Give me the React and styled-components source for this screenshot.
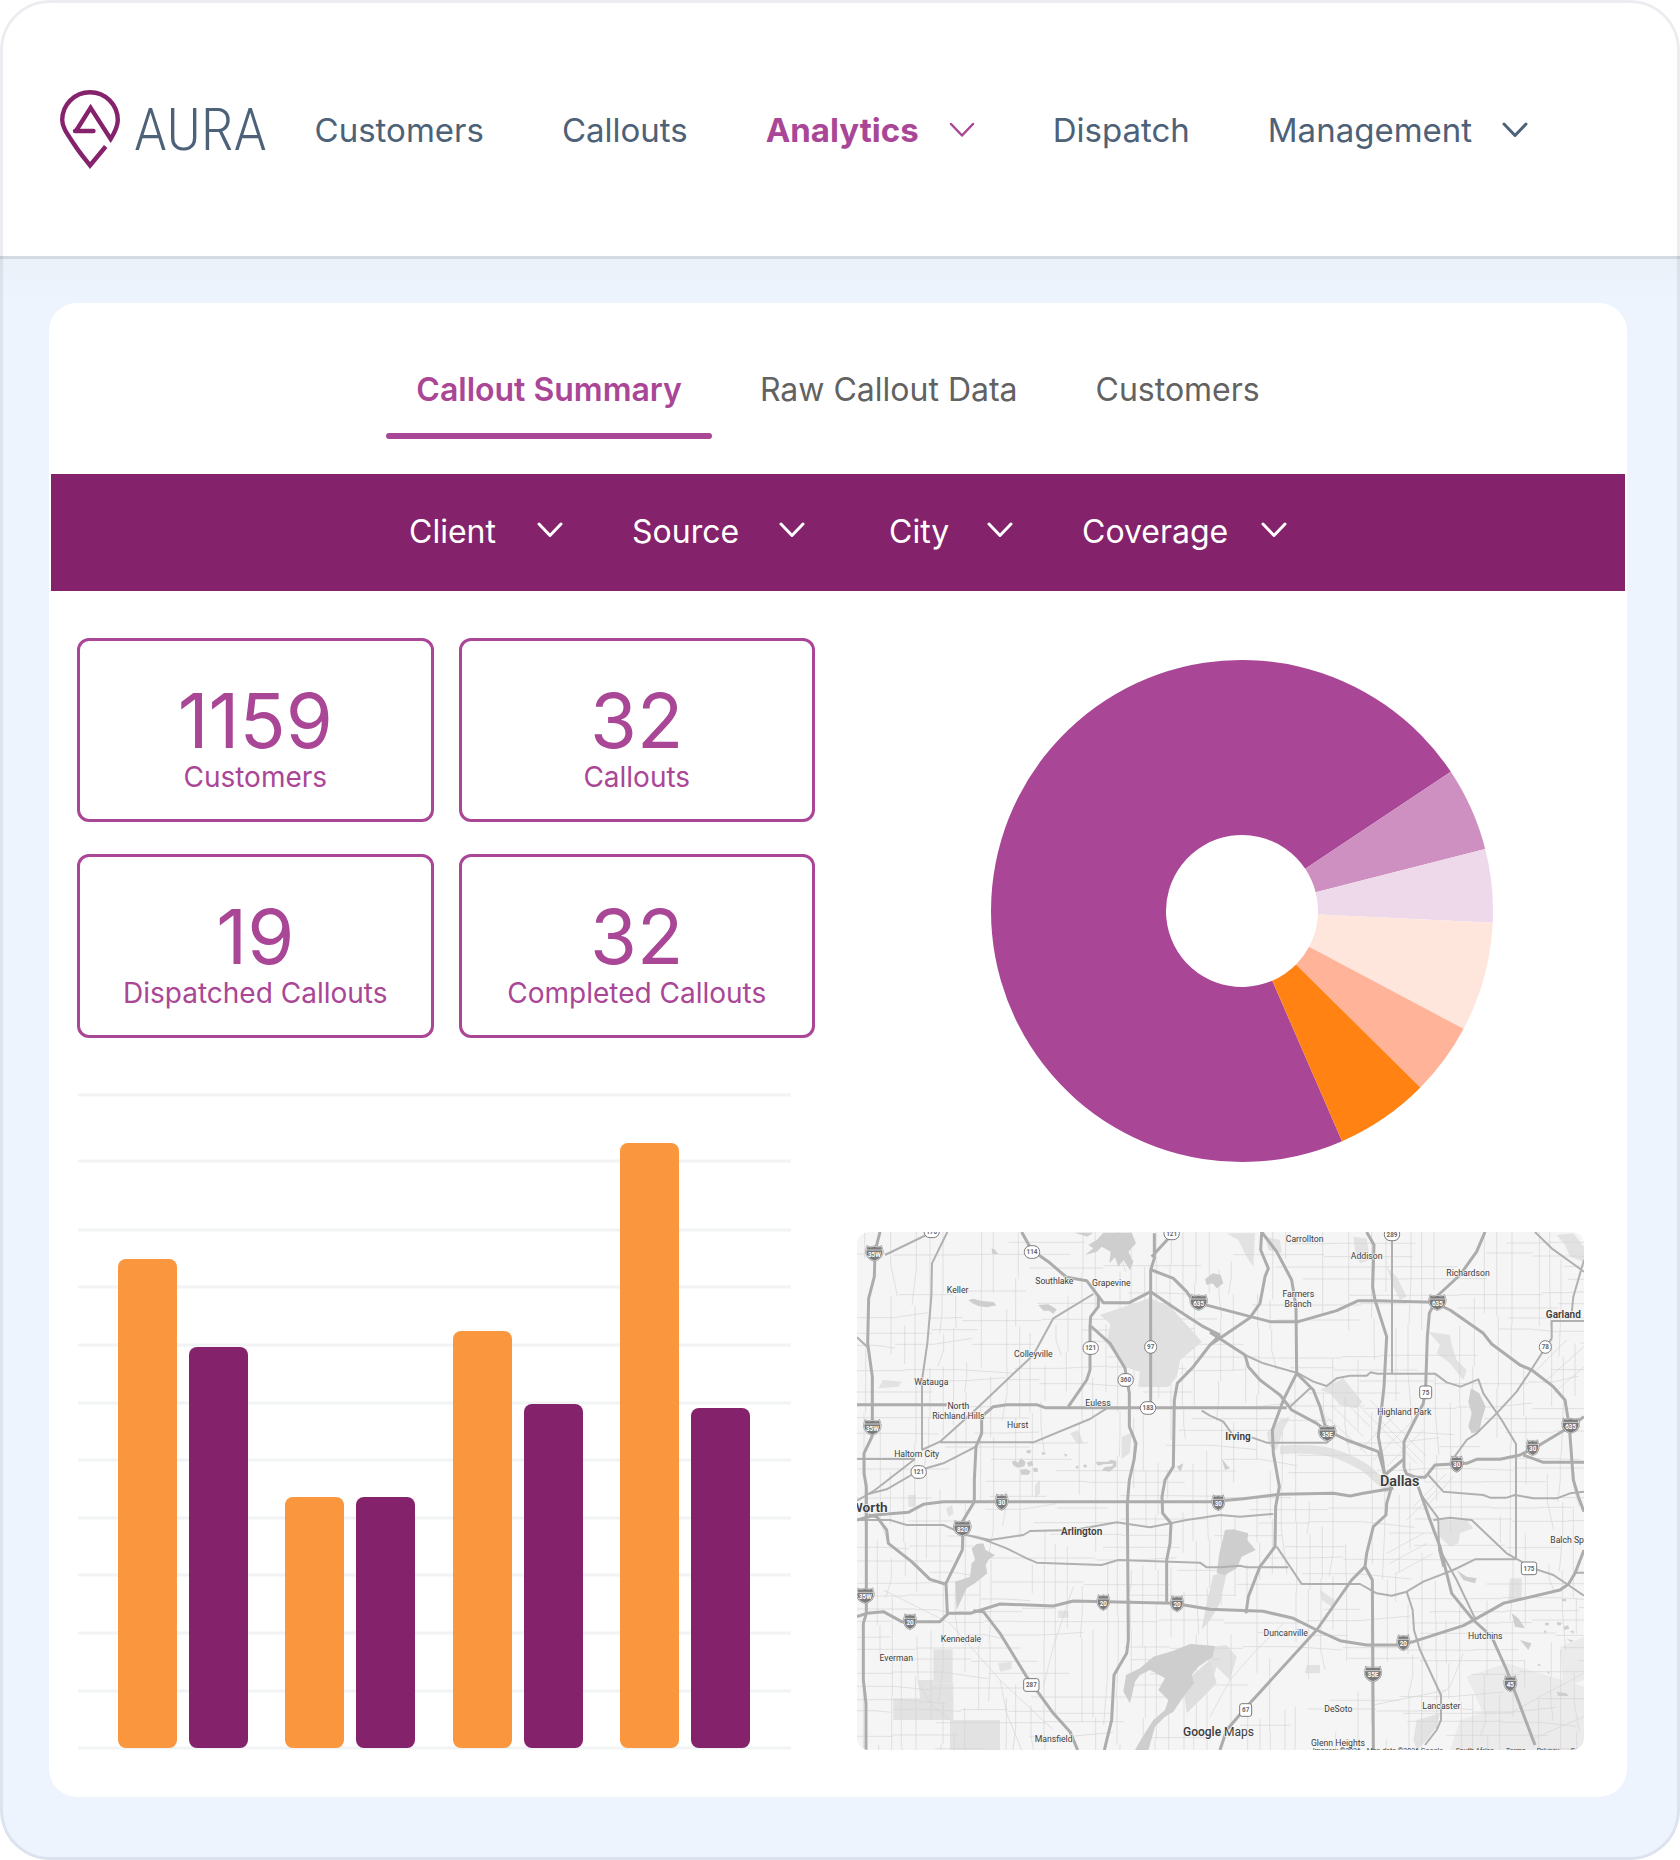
import React from "react";
import styled, { createGlobalStyle } from "styled-components";

const color = {
  plum: "#84226b",
  orchid: "#aa4696",
  slate: "#4d6178",
  gray: "#626262",
  orange: "#fa963e",
  sky: "#eef4fd",
};

const GlobalStyle = createGlobalStyle`
  *, *::before, *::after { box-sizing: border-box; }
  body { margin: 0; background: #fff; font-family: Inter, "Liberation Sans", sans-serif; }
  button, select { font: inherit; color: inherit; background: none; border: 0; margin: 0; padding: 0; cursor: pointer; }
  a { color: inherit; text-decoration: none; }
`;

const Frame = styled.div`
  position: relative;
  overflow: hidden;
  border-radius: 50px;
  background: ${color.sky};
  &::after {
    content: "";
    position: absolute;
    inset: 0;
    border: 3px solid rgba(40, 60, 85, 0.09);
    border-radius: inherit;
    pointer-events: none;
  }
`;

const Header = styled.header`
  display: flex;
  align-items: center;
  gap: 48px;
  padding: 90px 60px 87px;
  background: #fff;
  border-bottom: 3px solid #d4dae2;
`;

const Logo = styled.a`
  display: flex;
  align-items: center;
  gap: 14px;
  height: 79px;
  color: ${color.slate};
  font: 300 60px/76px "Roboto Condensed", "Liberation Sans Narrow", "Liberation Sans", sans-serif;
`;

const Nav = styled.nav`
  display: flex;
  align-items: center;
  gap: 78px;
`;

const navItem = `
  display: flex;
  align-items: center;
  font-size: 33px;
  line-height: 40px;
  white-space: nowrap;
`;

const NavLink = styled.a`
  ${navItem}
  color: ${color.slate};
`;

const NavMenu = styled.button`
  && {
    ${navItem}
    gap: 30px;
    color: ${(p) => (p.$active ? color.orchid : color.slate)};
    font-weight: ${(p) => (p.$active ? 700 : 400)};
  }
`;

const Main = styled.main`
  padding: 44px 53px 63px 49px;
  background: linear-gradient(#eaf1f9, ${color.sky} 40px);
`;

const Card = styled.section`
  background: #fff;
  border-radius: 28px;
  overflow: hidden;
`;

const Tabs = styled.div`
  display: flex;
  justify-content: center;
  gap: 18px;
  padding: 67px 24px 35px;
`;

const Tab = styled.button`
  && {
    padding: 0 30px 29px;
    color: ${(p) => (p.$active ? color.orchid : color.gray)};
    font-size: 32px;
    line-height: 40px;
    font-weight: ${(p) => (p.$active ? 600 : 400)};
  }
  position: relative;
  white-space: nowrap;
  &::after {
    content: "";
    display: ${(p) => (p.$active ? "block" : "none")};
    position: absolute;
    left: 0;
    right: 0;
    bottom: 0;
    height: 6px;
    border-radius: 3px;
    background: ${color.orchid};
  }
`;

const Filters = styled.form`
  display: flex;
  justify-content: center;
  gap: 84px;
  margin: 0 2px;
  padding: 34px 0 35px 20px;
  background: ${color.plum};
  color: #fff;
`;

const FilterGroup = styled.div`
  display: flex;
  gap: 69px;
`;

const FilterField = styled.label`
  display: grid;
  align-items: center;
  width: ${(p) => p.$width}px;
  > * { grid-area: 1 / 1; }
  > svg { justify-self: end; margin-bottom: 4px; pointer-events: none; }
`;

const FilterSelect = styled.select`
  && {
    appearance: none;
    width: 100%;
    font-size: 32px;
    line-height: 48px;
    height: 48px;
  }
  option { color: #333; }
`;

const Content = styled.div`
  display: grid;
  grid-template-columns: minmax(0, 738fr) minmax(0, 727fr);
  column-gap: 42px;
  padding: 47px 43px 47px 28px;
`;

const Column = styled.div`
  display: flex;
  flex-direction: column;
  justify-content: space-between;
  gap: 55px;
`;

const Stats = styled.div`
  display: grid;
  grid-template-columns: 1fr 1fr;
  gap: 32px 25px;
`;

const Stat = styled.article`
  height: 184px;
  padding-top: 41px;
  border: 3px solid ${color.orchid};
  border-radius: 12px;
  color: ${color.orchid};
  text-align: center;
`;

const StatValue = styled.div`
  font-size: 76px;
  line-height: 76px;
`;

const StatLabel = styled.div`
  font-size: 28px;
  line-height: 38px;
  white-space: nowrap;
`;

const BarSvg = styled.svg`
  display: block;
  width: 100%;
  height: auto;
`;

const DonutWrap = styled.div`
  padding: 22px 0 0 42px;
`;

const DonutSvg = styled.svg`
  display: block;
  width: 502px;
  max-width: 100%;
  height: auto;
  margin: 0 auto;
`;

const MapSvg = styled.svg`
  display: block;
  width: 100%;
  height: auto;
  border-radius: 12px;
  font-family: Roboto, "Liberation Sans", sans-serif;
`;

function Chevron({ weight = 3 }) {
  return (
    <svg width="26" height="16" viewBox="0 0 26 16" fill="none" stroke="currentColor"
      strokeWidth={weight} strokeLinecap="round" strokeLinejoin="round" aria-hidden="true">
      <path d="M2 2 L13 13.5 L24 2" />
    </svg>
  );
}

function LogoMark() {
  return (
    <svg width="60" height="79" viewBox="0 0 60 79" fill="none" stroke="#84226b" strokeWidth="4.4" aria-hidden="true">
      <path d="M45.7 56.5 L30 75.5 C25 69 19 62 14 54 C6.500 43 2.200 37 2.200 30 A27.800 27.800 0 0 1 57.800 30 C57.800 36 55 42 50.600 49 L30.600 17.800 L16 41" />
      <path d="M15 41 H33.500" strokeLinecap="round" />
    </svg>
  );
}

const GRID_LINES = [2, 68, 137, 194, 252, 310, 367, 425, 482, 540, 598, 655];
const BARS = [
  { x: 41, orange: 489, plum: 401 },
  { x: 208, orange: 251, plum: 251 },
  { x: 376, orange: 417, plum: 344 },
  { x: 543, orange: 605, plum: 340 },
];

function BarChart() {
  return (
    <BarSvg viewBox="0 0 738 657" role="img" aria-label="Callouts by period">
      {GRID_LINES.map((y) => (
        <line key={y} x1="1" x2="714" y1={y} y2={y} stroke="#f2f3f4" strokeWidth="3" />
      ))}
      {BARS.map((b) => (
        <g key={b.x}>
          <rect x={b.x} y={655 - b.orange} width="59" height={b.orange} rx="8" fill={color.orange} />
          <rect x={b.x + 71} y={655 - b.plum} width="59" height={b.plum} rx="8" fill={color.plum} />
        </g>
      ))}
    </BarSvg>
  );
}

const SLICES = [
  [66.5, 326.3, color.orchid],
  [-33.7, -14.3, "#cd90c0"],
  [-14.3, 2.7, "#eed9ea"],
  [2.7, 28, "#fee6dd"],
  [28, 44.7, "#ffb499"],
  [44.7, 66.5, "#ff8213"],
];

function slicePath(from, to, outer, inner) {
  const at = (deg, r) => {
    const a = (deg * Math.PI) / 180;
    return `${(251 + r * Math.cos(a)).toFixed(2)} ${(251 + r * Math.sin(a)).toFixed(2)}`;
  };
  const large = to - from > 180 ? 1 : 0;
  return `M${at(from, outer)} A${outer} ${outer} 0 ${large} 1 ${at(to, outer)} L${at(to, inner)} A${inner} ${inner} 0 ${large} 0 ${at(from, inner)} Z`;
}

function DonutChart() {
  return (
    <DonutSvg viewBox="0 0 502 502" role="img" aria-label="Callouts by type">
      {SLICES.map(([from, to, fill]) => (
        <path key={from} d={slicePath(from, to, 251, 76)} fill={fill} />
      ))}
    </DonutSvg>
  );
}

/* Map geometry */

function localStreets() {
  let seed = 11;
  const rnd = () => {
    seed = (seed * 16807) % 2147483647;
    return seed / 2147483647;
  };
  let d = "";
  for (let x = 70; x < 2232; x += 38) {
    let y = 36;
    while (y < 1590) {
      const len = 80 + rnd() * 220;
      if (rnd() > 0.42) {
        const sx = x + rnd() * 14;
        const bend = rnd() > 0.7 ? rnd() * 40 - 20 : 0;
        d += `M${sx.toFixed(0)} ${y.toFixed(0)}v${(len / 2).toFixed(0)}l${bend.toFixed(0)} ${(len / 2).toFixed(0)}`;
      }
      y += len;
    }
  }
  for (let y = 60; y < 1590; y += 38) {
    let x = 51;
    while (x < 2232) {
      const len = 90 + rnd() * 240;
      if (rnd() > 0.42) {
        const sy = y + rnd() * 14;
        const bend = rnd() > 0.7 ? rnd() * 40 - 20 : 0;
        d += `M${x.toFixed(0)} ${sy.toFixed(0)}h${(len / 2).toFixed(0)}l${(len / 2).toFixed(0)} ${bend.toFixed(0)}`;
      }
      x += len;
    }
  }
  return d;
}
const STREETS = localStreets();

const DIAGONALS =
  "M1560 560l170 170M1590 540l170 170M1620 600l130 130M1560 690l120-120M1600 720l130-130M1640 740l110-110M1480 560l90 90M1460 590l120 110M1510 540l80 80M1700 900l90-90M1720 860l100-100M1750 870l90-100M1640 1000l110-60M1650 1030l110-60M1670 1060l110-60M2120 480l112-100M2140 520l92-80M2090 450l90-90M130 1110L330 1210L480 1380L640 1530M230 1250L235 1390L270 1450L330 1500M480 1380L500 1480L545 1590M700 1100L640 1280L610 1400M1870 1300L1830 1400L1780 1440M1110 1490L1170 1380L1240 1300L1330 1210M1690 1480H2010L2100 1430L2232 1360M2070 1560L2232 1490M1600 1455L1820 1410";

const PARKS = [
  "M780 285L870 255L930 235L990 260L1085 365L1020 420L1010 470L985 500L895 500L900 455L855 440L800 370L812 312Z",
  "M160 1435H240L235 1380H280V1390H340V1500H480V1590H330V1500L160 1500Z",
  "M1440 510L1510 475L1530 500L1567 545L1550 565L1500 555L1470 520Z",
  "M1765 335L1830 345L1835 375L1850 420L1880 450L1870 480L1830 430L1790 400L1800 375Z",
  "M1800 900H1880L1900 925L1860 940L1855 970L1830 980L1800 950Z",
  "M1730 1500L1800 1480L1790 1520L1760 1560L1730 1590L1720 1560Z",
  "M1160 40H1245L1240 140L1220 110L1195 60Z M1275 50L1320 60L1325 100L1285 90Z",
  "M1540 50L1580 55L1590 120L1560 130L1545 90Z M1640 140L1670 170L1700 230L1680 240L1660 200Z",
  "M2150 45L2200 40L2232 80V125L2190 110L2175 75Z",
  "M2010 1075H2045V1140H2005Z M1400 1335H1440V1360H1395Z M280 1288H338V1390H280Z M655 1172h30v22h-30Z M475 1330l40-5v22l-35 8Z",
  "M1110 1280L1160 1275L1190 1310L1170 1380L1130 1340L1110 1400Z M1280 640l40-40l30-10l-20 40l-20 60l-20 -10Z",
  "M845 650l30-12l-5 60l-25 20Z M690 640l25-10l15 40l-20 0Z M1440 1110l45 30l-10 20l-30-20Z M600 780v40l-15 15v-40Z",
  "M130 480l55 5l-10 15l-60 5Z M205 825h22v35h-22Z M318 865l18-10l5 25l-15 10Z",
];

const SUBURB = "M1880 1370L2000 1330L2232 1400V1590H1830L1860 1500L1930 1480Z M2160 1280L2232 1250V1380L2170 1400Z";

const WATER = [
  "M703 38H760L742 50ZM745 75L770 60L790 38H875L888 70L865 95L880 125L870 150L850 120L835 140L825 112L808 130L812 95L785 80L770 95L735 105L760 85Z",
  "M1095 178L1118 160L1142 165L1150 190L1130 205L1118 190L1100 195Z",
  "M395 985L410 972L430 970L437 990L465 1005L445 1020L437 1035L442 1060L405 1090L380 1105L350 1170L345 1085L390 1070L395 1030L405 1020Z",
  "M858 1365L900 1345L940 1310L1000 1292L1050 1272L1125 1278L1118 1310L1075 1340L1055 1365L1062 1390L1030 1430L1000 1475L975 1490L945 1520L925 1590H885L905 1555L940 1500L975 1470L985 1440L955 1410L975 1375L930 1350L900 1365L885 1385L870 1450L850 1415Z",
  "M1155 930L1180 928L1225 940L1222 960L1247 990L1205 1010L1190 1045L1155 1065L1130 1060L1138 1000Z",
  "M1893 505L1918 520L1937 560L1925 600L1918 635L1895 640L1885 620L1895 580L1885 545Z",
  "M515 725l12-4l6 8l10-14l14 12l-4 12l-20 4l-12-6ZM560 728l16-6l4 14l-14 4ZM540 750l18-4l14 8l-6 10l-22 0ZM578 745l14-2l2 12l-12 2Z",
  "M765 725h40l8-6l16 4v16l-20 16l-24-4l10-10l22-2l2-8l-28 2l-16 4ZM1145 715l15 20l10 10l-15 5Z M1010 740l20-10l-8 25Z M705 740l12-4l-4 12Z M730 735l8-2l4 8l-10 2Z",
  "M1850 1050l30 20l30 5l-5 15l-35-10Z M2015 1180l20 15l20 30l-30-5Z M2040 1260l35 10l-10 20Z M2150 1415l30 5l5 8l-30 0Z M620 700l-12 6l-4-10Z M560 690h12v10h-12Z M670 700l12 4l-4 8Z",
  "M385 240l16-4l20 6l40 4l8 10l-28 6l-26-4l-18-8Z M595 255l30-2l25 15l-10 14l-12-10l-18 0Z M455 85l10 4l10 14l-18-2Z",
  "M2115 1208h12v8h-12ZM2150 1206l16 2l-4 8h-10ZM2170 1220l14-4l4 10l-14 4ZM2190 1235l10-4l2 10ZM2110 1230l10 4l-4 8ZM2180 1258l20 2l-6 6ZM2165 1138l12-2l2 8h-12ZM2090 1335l10-4l2 8ZM2120 1355l8 0l0 8Z",
];

const PALE_WATER = "M1120 1065L1160 1060L1140 1150L1110 1200L1085 1230L1100 1150Z M1030 1390L1110 1320L1130 1390L1090 1430L1040 1480Z";

const HIGHWAYS = [
  "M120 36L105 95L103 170L86 235L83 370L97 470V600L96 650L72 700V760L79 800V1180L70 1210V1380L78 1450V1590",
  "M545 36L575 90L625 125L680 172L740 182L770 222L790 248H868L932 215L1000 262L1090 320L1140 345",
  "M990 50L935 110M943 40V115L932 150V560M935 150L1000 175L1040 215L1060 245L1140 266L1220 287L1290 305H1375L1490 272L1555 242H1610L1780 247L1830 270L1930 340L1955 372L2040 435L2075 450L2140 500L2175 540L2188 620L2200 780L2215 830L2232 875",
  "M775 225V260L752 290L750 320V450L740 480L685 560",
  "M752 318L810 370L855 445L868 520V620L888 670L882 720L868 780L862 850L865 1260L860 1300L822 1365L815 1500L793 1590",
  "M51 554H320M403 845V780L408 680L425 640V590L460 560L500 554H590L615 563H1340",
  "M403 845L370 900L367 990L318 1090L322 1180",
  "M51 900L105 885L205 877L250 853L310 845H1110L1210 836L1320 823L1480 820L1530 828L1570 820L1660 805M1635 765L1690 718M1692 745L1700 762L1730 772H1755L1785 735L1880 730L1910 718H1980L2040 705L2090 680L2190 620L2232 590M2050 705L2110 727H2232",
  "M51 1190L80 1180L130 1175L185 1205H300L325 1180H390L480 1152L640 1158L700 1143L1000 1150L1110 1168L1270 1174L1360 1195L1430 1230L1500 1262L1580 1275H1670L1720 1265L1870 1217L1910 1195L1990 1150L2160 1110L2185 1093L2205 1060L2232 990",
  "M85 885L110 890L140 930L145 970L215 1025L270 1078L315 1092M400 1172L430 1175L480 1240L560 1370L640 1480L690 1535L713 1590",
  "M1140 345L1110 375L1060 440L1012 490L1003 540L1000 740L975 780L966 830L968 880L993 910L990 970L980 1020V1150",
  "M1110 375L1230 293L1260 250L1275 170L1285 145L1262 90L1265 36",
  "M1265 36L1310 95L1355 180L1368 260L1370 460L1330 540L1297 630L1300 700L1318 800L1307 860L1305 980L1260 1040L1225 1130L1218 1180",
  "M1370 460L1420 510L1440 560L1458 630L1520 660L1615 695L1635 765L1655 800L1640 850L1638 885L1600 920L1580 1000L1575 1040L1597 1080L1600 1590M1575 1040L1535 1080L1430 1230L1220 1460L1160 1530L1140 1590",
  "M1110 337L1215 405L1225 440L1260 480L1320 525L1355 570L1430 610L1462 635",
  "M1580 36L1602 75L1598 200L1605 240L1640 350L1632 500L1615 650L1628 720L1633 760",
  "M1935 36L1910 95L1860 165L1795 225L1768 280L1762 350L1757 500L1750 550L1692 665V745",
  "M1735 800L1770 900L1800 980L1820 1060L1835 1120L1900 1200L1955 1250L2000 1350L2085 1575",
];

const ARTERIALS = [
  "M51 352L83 382M135 105L265 42M322 36L276 130L274 230L262 370L246 480V690",
  "M1215 405L1270 430L1375 460L1420 485L1460 498L1490 475L1530 467H1580L1592 457L1612 461H1785L1820 487L1862 500L1915 478L1930 520L1985 600L2028 672V1018",
  "M760 222L640 295L580 405L400 575L300 665L245 690M225 717L105 810L80 825L51 842M300 667H580L750 597L800 565H860",
  "M51 717H225M408 680L310 730L240 750L140 808L85 822M1085 572L1110 587L1150 605L1175 640M1235 652L1280 668H1460L1480 650",
  "M51 900H150L200 915H310L380 945L430 958L500 985L560 1015L590 1028L785 1035L835 1020L1080 1028L1100 1042H1140L1200 1037L1220 1042H1345M380 945L450 960L550 945L570 933L700 930L830 907L930 922L1040 900L1140 885L1200 890L1300 882",
  "M1350 560L1410 505M1656 60V460M2085 36L2135 85L2232 155M2232 120L2200 230L2195 280M2232 303H2135V355L2118 380L2070 455L2030 515L1970 580L1910 640L1880 660L1840 715",
  "M1740 820L1795 895L1797 990L1810 1040M1800 990L1850 1080L1905 1195M1765 765L1810 815L1930 825L1950 833H2000L2025 825L2080 835H2150L2190 820L2232 815M1780 900L1830 893L1895 900L2000 1000L2080 1045L2140 1065L2185 1095L2232 1127",
  "M1310 980L1385 1092H1560L1610 1120L1655 1127L1700 1115L1750 1085L1840 1050L1905 1018H2028",
  "M1700 1115L1718 1170L1722 1230L1740 1290L1803 1425V1500L1790 1530L1755 1575M2205 1058H2232",
];

const INTERSTATES = [
  [103, 100, "35W"], [97, 622, "35W"], [1076, 247, "635"], [485, 846, "30"], [367, 925, "820"],
  [76, 1127, "35W"], [210, 1205, "20"], [790, 1147, "20"], [1011, 1151, "20"], [1135, 848, "30"],
  [1792, 247, "635"], [1462, 640, "35E"], [2192, 617, "635"], [2078, 683, "30"], [1850, 732, "30"],
  [1690, 1268, "20"], [1599, 1362, "35E"], [2011, 1391, "45"],
];

const ROUTES = [
  [275, 34, "170"], [576, 96, "114"], [995, 40, "121"], [752, 384, "121"], [932, 381, "97"],
  [857, 480, "360"], [924, 564, "183"], [236, 756, "121"], [1656, 43, "289"], [2116, 381, "78"],
  [1757, 517, "75", true], [574, 1395, "287", true], [2067, 1045, "175", true], [1217, 1470, "67", true],
];

const TOWNS = [
  [353, 218, "Keller"], [643, 192, "Southlake"], [814, 199, "Grapevine"], [580, 412, "Colleyville"],
  [274, 496, "Watauga"], [355, 568, "North"], [355, 598, "Richland Hills"], [533, 623, "Hurst"],
  [774, 558, "Euless"], [230, 710, "Haltom City"], [1394, 66, "Carrollton"], [1580, 118, "Addison"],
  [1884, 167, "Richardson"], [1375, 231, "Farmers"], [1374, 261, "Branch"], [1693, 586, "Highland Park"],
  [363, 1266, "Kennedale"], [169, 1324, "Everman"], [641, 1567, "Mansfield"], [1337, 1247, "Duncanville"],
  [1936, 1256, "Hutchins"], [1495, 1475, "DeSoto"], [1804, 1466, "Lancaster"], [1494, 1578, "Glenn Heights"],
  [2210, 968, "Balch Springs"],
];

const CREDITS = [
  [1418, "Imagery ©2026"], [1580, "Map data ©2026 Google"], [1847, "South Africa"],
  [1998, "Terms"], [2090, "Privacy"], [2192, "S"],
];

const TownLabel = styled.text`
  font-size: ${(p) => p.$size || 26}px;
  font-weight: ${(p) => p.$weight || 400};
  text-anchor: ${(p) => p.$anchor || "middle"};
  fill: #3c3c3c;
  stroke: #f6f6f6;
  stroke-width: 4px;
  stroke-linejoin: round;
  paint-order: stroke;
`;

const ShieldText = styled.text`
  font-size: 19px;
  font-weight: 700;
  text-anchor: middle;
  fill: ${(p) => (p.$light ? "#fff" : "#666")};
`;

const CreditText = styled.text`
  font-size: 21px;
  fill: #444;
`;

function Interstate({ x, y, name }) {
  const w = name.length > 2 ? 25 : 18;
  const shield = `M${-w + 4} -21 Q${-w / 2} -17 0 -21 Q${w / 2} -17 ${w - 4} -21 L${w} -8 Q${w + 2} 14 0 23 Q${-w - 2} 14 ${-w} -8 Z`;
  return (
    <g transform={`translate(${x} ${y})`}>
      <path d={shield} fill="#7b7b7b" stroke="#8b8b8b" strokeWidth="5" />
      <path d={shield} fill="#7b7b7b" stroke="#f5f5f5" strokeWidth="2" />
      <path d={`M${-w} -10 H${w}`} stroke="#f5f5f5" strokeWidth="2" />
      <ShieldText $light y="10">{name}</ShieldText>
    </g>
  );
}

function Route({ x, y, name, us }) {
  const w = name.length > 2 ? 23 : 18;
  return (
    <g transform={`translate(${x} ${y})`}>
      <rect x={-w} y="-19" width={w * 2} height="38" rx={us ? 7 : 18} fill="#fff" stroke="#7b7b7b" strokeWidth="3" />
      <ShieldText y="7">{name}</ShieldText>
    </g>
  );
}

function AreaMap() {
  return (
    <MapSvg viewBox="51 36 2181 1554" role="img" aria-label="Map of the Dallas and Fort Worth area">
      <rect x="51" y="36" width="2181" height="1554" fill="#f5f5f5" />
      <path d={SUBURB} fill="#ebebeb" />
      <g fill="#e2e2e2">{PARKS.map((d) => <path key={d} d={d} />)}</g>
      <path d="M1320 690Q1440 680 1510 710T1600 765L1650 810" fill="none" stroke="#e2e2e2" strokeWidth="26" />
      <g fill="none" stroke="#d5d5d5" strokeWidth="2" strokeLinejoin="round">
        <path d={STREETS} />
        <path d={DIAGONALS} />
      </g>
      <path d={PARKS[0]} fill="#e0e0e0" />
      <path d={PALE_WATER} fill="#dedede" />
      <g fill="#cecece">{WATER.map((d) => <path key={d} d={d} />)}</g>
      <g fill="none" stroke="#b0b0b0" strokeWidth="6" strokeLinejoin="round">
        {ARTERIALS.map((d) => <path key={d} d={d} />)}
      </g>
      <g fill="none" stroke="#acacac" strokeWidth="9" strokeLinejoin="round">
        {HIGHWAYS.map((d) => <path key={d} d={d} />)}
      </g>
      {INTERSTATES.map(([x, y, name]) => <Interstate key={`${x}-${y}`} x={x} y={y} name={name} />)}
      {ROUTES.map(([x, y, name, us]) => <Route key={`${x}-${y}`} x={x} y={y} name={name} us={us} />)}
      {TOWNS.map(([x, y, name]) => <TownLabel key={name} x={x} y={y}>{name}</TownLabel>)}
      <TownLabel x="2170" y="295" $size={30} $weight={600}>Garland</TownLabel>
      <TownLabel x="1194" y="659" $size={30} $weight={600}>Irving</TownLabel>
      <TownLabel x="725" y="944" $size={30} $weight={600}>Arlington</TownLabel>
      <TownLabel x="1679" y="798" $size={43} $weight={600}>Dallas</TownLabel>
      <TownLabel x="143" y="876" $size={41} $weight={600} $anchor="end">Fort Worth</TownLabel>
      <TownLabel x="1029" y="1549" $size={36} $anchor="start">
        <tspan fontWeight="500">Google</tspan> Maps
      </TownLabel>
      {CREDITS.map(([x, text]) => <CreditText key={text} x={x} y="1598">{text}</CreditText>)}
    </MapSvg>
  );
}

const FILTER_GROUPS = [
  [["Client", 154], ["Source", 173]],
  [["City", 124], ["Coverage", 205]],
];
const STATS = [
  ["1159", "Customers"],
  ["32", "Callouts"],
  ["19", "Dispatched Callouts"],
  ["32", "Completed Callouts"],
];

export default function App() {
  return (
    <>
      <GlobalStyle />
      <Frame>
        <Header>
          <Logo href="#home">
            <LogoMark />
            AURA
          </Logo>
          <Nav aria-label="Main">
            <NavLink href="#customers">Customers</NavLink>
            <NavLink href="#callouts">Callouts</NavLink>
            <NavMenu type="button" aria-haspopup="menu" $active>
              Analytics
              <Chevron weight={2.5} />
            </NavMenu>
            <NavLink href="#dispatch">Dispatch</NavLink>
            <NavMenu type="button" aria-haspopup="menu">
              Management
              <Chevron />
            </NavMenu>
          </Nav>
        </Header>
        <Main>
          <Card>
            <Tabs role="tablist">
              <Tab type="button" role="tab" aria-selected="true" $active>Callout Summary</Tab>
              <Tab type="button" role="tab" aria-selected="false">Raw Callout Data</Tab>
              <Tab type="button" role="tab" aria-selected="false">Customers</Tab>
            </Tabs>
            <Filters>
              {FILTER_GROUPS.map((group) => (
                <FilterGroup key={group[0][0]}>
                  {group.map(([name, width]) => (
                    <FilterField key={name} $width={width}>
                      <FilterSelect aria-label={name} defaultValue="">
                        <option value="">{name}</option>
                      </FilterSelect>
                      <Chevron />
                    </FilterField>
                  ))}
                </FilterGroup>
              ))}
            </Filters>
            <Content>
              <Column>
                <Stats>
                  {STATS.map(([value, label]) => (
                    <Stat key={label}>
                      <StatValue>{value}</StatValue>
                      <StatLabel>{label}</StatLabel>
                    </Stat>
                  ))}
                </Stats>
                <BarChart />
              </Column>
              <Column>
                <DonutWrap>
                  <DonutChart />
                </DonutWrap>
                <AreaMap />
              </Column>
            </Content>
          </Card>
        </Main>
      </Frame>
    </>
  );
}
